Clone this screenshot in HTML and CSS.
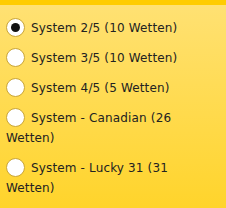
FILE: index.html
```html
<!DOCTYPE html>
<html>
<head>
  <title>Systemwetten</title>
  <link rel="stylesheet" href="styles.css">
</head>
<body>
  <div class="panel">
    <label class="option"><span class="radio checked"></span>System 2/5 (10 Wetten)</label>
    <label class="option"><span class="radio"></span>System 3/5 (10 Wetten)</label>
    <label class="option"><span class="radio"></span>System 4/5 (5 Wetten)</label>
    <label class="option"><span class="radio"></span>System - Canadian (26 Wetten)</label>
    <label class="option"><span class="radio"></span>System - Lucky 31 (31 Wetten)</label>
  </div>
</body>
</html>
```

FILE: styles.css
```css
body {
  margin: 0;
  padding: 0;
  width: 226px;
  height: 208px;
  overflow: hidden;
  font-family: "DejaVu Sans", Verdana, sans-serif;
}

.panel {
  height: 190px;
  border-top: 5px solid #ffcc00;
  background: linear-gradient(#ffe173, #ffd42b);
  padding: 13px 20px 0 6px;
}

.option {
  display: block;
  font-size: 12px;
  letter-spacing: 0.15px;
  line-height: 20px;
  color: #222;
  margin-bottom: 10px;
}

.radio {
  display: inline-block;
  width: 17px;
  height: 17px;
  border: 1px solid #c9a53a;
  border-radius: 50%;
  background: #fff;
  vertical-align: -5px;
  margin-right: 6px;
  position: relative;
}

.radio.checked::after {
  content: "";
  position: absolute;
  left: 4px;
  top: 4px;
  width: 9px;
  height: 9px;
  border-radius: 50%;
  background: #111;
}
```
